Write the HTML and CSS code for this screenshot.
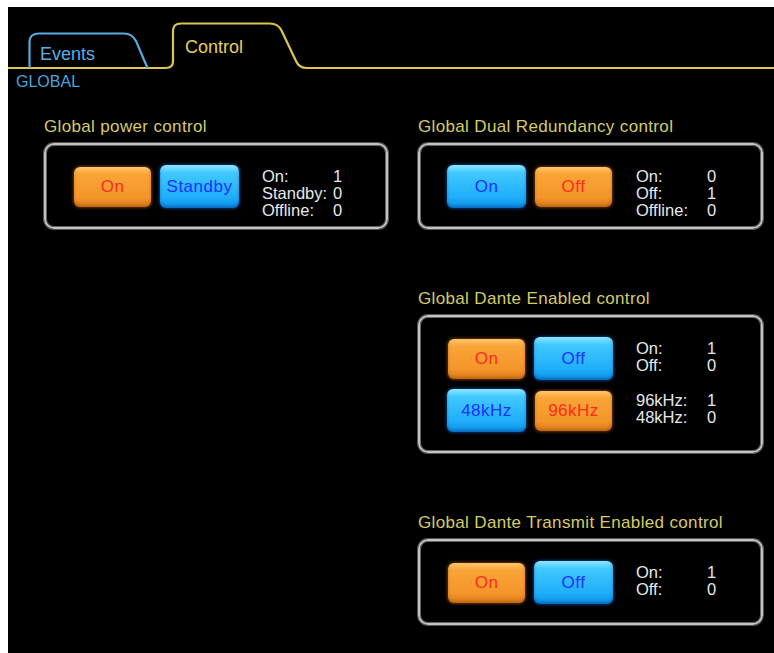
FILE: index.html
```html
<!DOCTYPE html>
<html lang="en">
<head>
    <meta charset="UTF-8">
    <meta name="viewport" content="width=device-width, initial-scale=1.0">
    <title>Control - Global</title>
    <link rel="stylesheet" href="styles.css">
</head>
<body>
<div class="screen">
    <!-- tab strip -->
    <div class="tabbar">
        <svg class="tab-lines" width="766" height="63" viewBox="0 0 766 63">
            <path d="M0 61 H158 Q165 61 165 54 V24 Q165 16.5 173 16.5 H262 Q270 16.5 273.5 23.5 L288 54 Q291 61 299 61 H766" fill="none" stroke="#dcc650" stroke-width="2.2"/>
            <path d="M21.5 61 V35 Q21.5 26.5 31 26.5 H116 Q124 26.5 128 34 L139.5 61" fill="none" stroke="#58a9de" stroke-width="2.2"/>
        </svg>
        <span class="tab tab-events">Events</span>
        <span class="tab tab-control">Control</span>
    </div>

    <div class="section-label">GLOBAL</div>

    <div class="columns">
        <div class="col col-left">
            <div class="group">
                <div class="group-title">Global power control</div>
                <div class="panel">
                    <div class="ctl-row">
                        <button class="btn btn-orange">On</button>
                        <button class="btn btn-blue">Standby</button>
                        <div class="stats">
                            <div class="stat"><span class="stat-label">On:</span><span>1</span></div>
                            <div class="stat"><span class="stat-label">Standby:</span><span>0</span></div>
                            <div class="stat"><span class="stat-label">Offline:</span><span>0</span></div>
                        </div>
                    </div>
                </div>
            </div>
        </div>

        <div class="col col-right">
            <div class="group">
                <div class="group-title">Global Dual Redundancy control</div>
                <div class="panel">
                    <div class="ctl-row">
                        <button class="btn btn-blue">On</button>
                        <button class="btn btn-orange">Off</button>
                        <div class="stats">
                            <div class="stat"><span class="stat-label">On:</span><span>0</span></div>
                            <div class="stat"><span class="stat-label">Off:</span><span>1</span></div>
                            <div class="stat"><span class="stat-label">Offline:</span><span>0</span></div>
                        </div>
                    </div>
                </div>
            </div>

            <div class="group">
                <div class="group-title">Global Dante Enabled control</div>
                <div class="panel">
                    <div class="ctl-row">
                        <button class="btn btn-orange">On</button>
                        <button class="btn btn-blue">Off</button>
                        <div class="stats">
                            <div class="stat"><span class="stat-label">On:</span><span>1</span></div>
                            <div class="stat"><span class="stat-label">Off:</span><span>0</span></div>
                        </div>
                    </div>
                    <div class="ctl-row">
                        <button class="btn btn-blue">48kHz</button>
                        <button class="btn btn-orange">96kHz</button>
                        <div class="stats">
                            <div class="stat"><span class="stat-label">96kHz:</span><span>1</span></div>
                            <div class="stat"><span class="stat-label">48kHz:</span><span>0</span></div>
                        </div>
                    </div>
                </div>
            </div>

            <div class="group">
                <div class="group-title">Global Dante Transmit Enabled control</div>
                <div class="panel">
                    <div class="ctl-row">
                        <button class="btn btn-orange">On</button>
                        <button class="btn btn-blue">Off</button>
                        <div class="stats">
                            <div class="stat"><span class="stat-label">On:</span><span>1</span></div>
                            <div class="stat"><span class="stat-label">Off:</span><span>0</span></div>
                        </div>
                    </div>
                </div>
            </div>
        </div>
    </div>
</div>
</body>
</html>
```

FILE: styles.css
```css
* {
    box-sizing: border-box;
}

body {
    margin: 7px 0 0 8px;
    background-color: #fff;
    font-family: "Liberation Sans", Arial, sans-serif;
}

.screen {
    background-color: #000;
    height: 646px;
    overflow: hidden;
}

/* tabs */
.tabbar {
    position: relative;
    height: 63px;
    display: flex;
    align-items: flex-start;
}

.tab-lines {
    position: absolute;
    left: 0;
    top: 0;
}

.tab {
    position: relative;
    font-size: 18px;
    line-height: 20px;
}

.tab-events {
    margin: 37px 0 0 32px;
    color: #5aaee6;
}

.tab-control {
    margin: 30px 0 0 90px;
    color: #e6d060;
}

.section-label {
    margin: 3px 0 0 8px;
    font-size: 16px;
    line-height: 18px;
    color: #4ea4dc;
}

/* layout */
.columns {
    display: flex;
    gap: 30px;
    margin-top: 26px;
    padding-left: 36px;
}

.col-left {
    width: 344px;
}

.col-right {
    width: 345px;
    display: flex;
    flex-direction: column;
    gap: 60px;
}

.group-title {
    font-size: 17px;
    line-height: 20px;
    letter-spacing: 0.35px;
    color: #d6cc64;
    margin-bottom: 6px;
    white-space: nowrap;
}

.panel {
    border: 2px solid #c2c2c2;
    border-radius: 10px;
    box-shadow: 0 0 0 1px #555, inset 0 0 0 1px #666;
    padding: 20px 0 19px 27px;
    display: flex;
    flex-direction: column;
    gap: 9px;
}

.ctl-row {
    display: flex;
    align-items: flex-start;
    gap: 8px;
    height: 43px;
}

/* buttons */
.btn {
    width: 79px;
    height: 43px;
    border: none;
    padding: 0;
    border-radius: 6px;
    font-family: inherit;
    font-size: 17px;
    letter-spacing: 0.5px;
    display: flex;
    align-items: center;
    justify-content: center;
    flex-shrink: 0;
}

.btn-orange {
    width: 77px;
    height: 40px;
    margin: 2px 1px 1px;
    color: #ff2a1a;
    background: linear-gradient(#ffc76c, #f9a437 18%, #f4962a 75%, #dc7c1c);
    box-shadow: 0 0 3px 1px rgba(190, 100, 20, 0.55), inset 0 -2px 3px rgba(150, 70, 0, 0.45);
}

.btn-blue {
    color: #1a32ff;
    background: linear-gradient(#8ee8ff, #41c8ff 18%, #1eaefa 75%, #0c90e2);
    box-shadow: 0 0 3px 1px rgba(20, 100, 200, 0.55), inset 0 -2px 3px rgba(0, 60, 160, 0.45);
}

/* counters */
.stats {
    margin-left: 15px;
    padding-top: 3px;
    font-size: 16.5px;
    line-height: 17px;
    color: #e8e8e8;
    white-space: nowrap;
}

.stat {
    display: flex;
}

.stat-label {
    width: 71px;
}
```
